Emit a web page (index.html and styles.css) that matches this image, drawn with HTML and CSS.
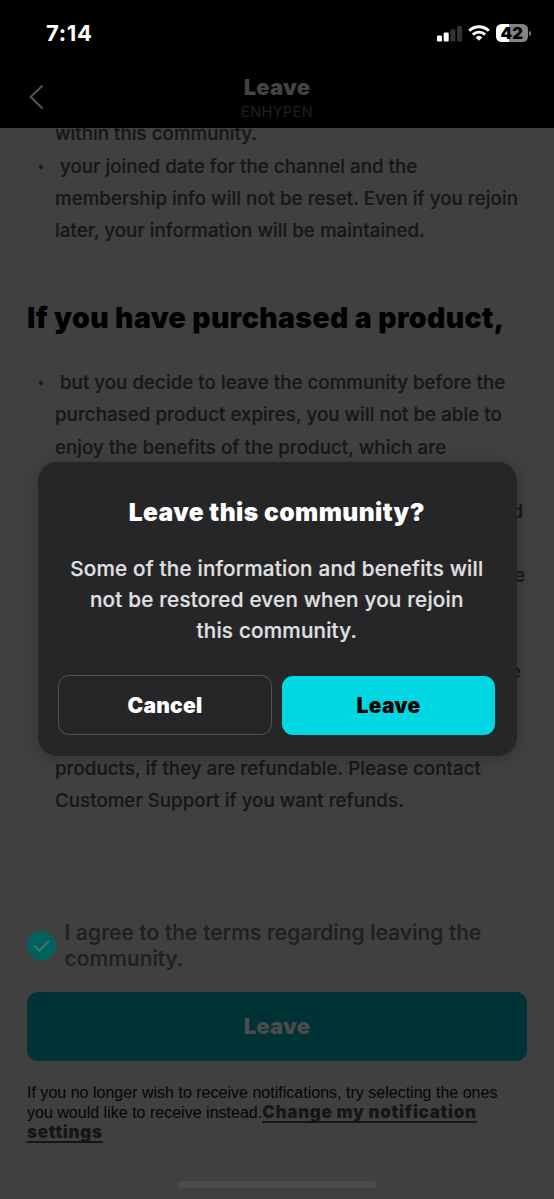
FILE: index.html
```html
<!DOCTYPE html>
<html lang="en">
<head>
<meta charset="utf-8">
<title>Leave</title>
<link rel="stylesheet" href="styles.css">
</head>
<body>
<div class="screen">
  <header class="top">
    <div class="status">
      <span class="time">7:14</span>
      <div class="status-icons">
        <svg class="signal" width="26" height="17" viewBox="0 0 26 17">
          <rect x="0" y="10.5" width="5" height="6" rx="1.2" fill="#fff"/>
          <rect x="6.7" y="7.5" width="5" height="9" rx="1.2" fill="#fff"/>
          <rect x="13.4" y="4.2" width="5" height="12.3" rx="1.2" fill="#333"/>
          <rect x="20.1" y="1" width="5" height="15.5" rx="1.2" fill="#333"/>
        </svg>
        <svg class="wifi" width="22" height="16" viewBox="0 0 22 16">
          <g fill="none" stroke="#fff" stroke-width="2.9">
            <path d="M1.2 5.8a14 14 0 0 1 19.6 0"/>
            <path d="M4.9 9.6a8.8 8.8 0 0 1 12.2 0"/>
          </g>
          <path d="M11 15.8l-3.3-3.4a4.8 4.8 0 0 1 6.6 0z" fill="#fff"/>
        </svg>
        <div class="battery"><span class="level">42</span><span class="cap"></span></div>
      </div>
    </div>
    <div class="nav">
      <svg class="back" width="16" height="26" viewBox="0 0 16 26"><path d="M14.500 1.500 2.700 13l11.800 11.500" fill="none" stroke="#555" stroke-width="2"/></svg>
      <div class="titles">
        <h1 class="title">Leave</h1>
        <p class="subtitle">ENHYPEN</p>
      </div>
    </div>
  </header>

  <main class="content">
    <ul class="list first">
      <li class="item cont">
        <span class="line">within this community.</span>
      </li>
      <li class="item">
        <span class="line ind">your joined date for the channel and the</span>
        <span class="line">membership info will not be reset. Even if you rejoin</span>
        <span class="line">later, your information will be maintained.</span>
      </li>
    </ul>
    <h2 class="heading">If you have purchased a product,</h2>
    <ul class="list second">
      <li class="item">
        <span class="line ind">but you decide to leave the community before the</span>
        <span class="line">purchased product expires, you will not be able to</span>
        <span class="line">enjoy the benefits of the product, which are</span>
        <span class="line"></span>
        <span class="line edge edge-a">d</span>
        <span class="line"></span>
        <span class="line edge edge-b">e</span>
        <span class="line"></span>
        <span class="line"></span>
        <span class="line edge edge-c">e</span>
        <span class="line"></span>
        <span class="line"></span>
        <span class="line">products, if they are refundable. Please contact</span>
        <span class="line">Customer Support if you want refunds.</span>
      </li>
    </ul>
    <div class="agree">
      <svg class="check" width="30" height="30" viewBox="0 0 30 30"><circle cx="14.500" cy="14.700" r="14.500" fill="#006260"/><path d="M7.300 14.700l5 5.200L22 9.900" fill="none" stroke="#4b7471" stroke-width="1.700"/></svg>
      <p class="agree-text">I agree to the terms regarding leaving the<br>community.</p>
    </div>
    <div class="submit">Leave</div>
    <p class="note">If you no longer wish to receive notifications, try selecting the ones<br>you would like to receive instead.<a class="link">Change my notification<br>settings</a></p>
    <div class="home"></div>
  </main>

  <div class="overlay">
    <section class="modal">
      <h2 class="modal-title">Leave this community?</h2>
      <p class="modal-text">Some of the information and benefits will<br>not be restored even when you rejoin<br>this community.</p>
      <div class="actions">
        <div class="btn cancel">Cancel</div>
        <div class="btn confirm">Leave</div>
      </div>
    </section>
  </div>
</div>
</body>
</html>
```
FILE: styles.css
```css
* { box-sizing: border-box; margin: 0; padding: 0; }
body { background: #404040; font-family: Inter, "Liberation Sans", sans-serif; }
.screen { position: relative; width: 554px; height: 1199px; overflow: hidden; background: #404040; display: flex; flex-direction: column; }
.top { height: 128px; background: #000; flex: none; }
.status { height: 66px; padding: 0 23px 0 46px; display: flex; justify-content: space-between; align-items: center; }
.time { color: #fff; font-size: 22px; font-weight: 700; letter-spacing: 0.7px; }
.status-icons { display: flex; align-items: center; }
.wifi { margin-left: 5px; }
.battery { display: flex; align-items: center; margin-left: 6px; }
.level { width: 32.5px; height: 18px; border-radius: 5.5px; background: linear-gradient(90deg, #fff 42%, #848484 42%); color: #000; font-size: 16.5px; line-height: 18.5px; font-weight: 900; text-align: center; }
.cap { width: 2px; height: 5px; margin-left: 1px; border-radius: 0 2px 2px 0; background: #777; }
.nav { height: 62px; padding-left: 28px; display: grid; grid-template-columns: 16px 1fr 44px; }
.back { margin-top: 17.5px; }
.titles { text-align: center; }
.title { margin-top: 8px; font-size: 22px; line-height: 26px; font-weight: 900; color: #434343; letter-spacing: 0.2px; }
.subtitle { margin-top: 4px; font-size: 14.5px; line-height: 16px; color: #202020; letter-spacing: 0.4px; }
.content { flex: 1; overflow: hidden; padding: 0 27px; display: flex; flex-direction: column; }
.list { list-style: none; color: #171717; font-size: 18.7px; font-weight: 500; line-height: 32.13px; letter-spacing: 0.05px; -webkit-text-stroke: 0.2px #171717; }
.first { margin-top: -9.6px; }
.item { position: relative; padding-left: 28px; }
.item::before { content: ""; position: absolute; left: 12px; top: 14px; width: 4px; height: 4px; border-radius: 50%; background: #171717; }
.cont::before { display: none; }
.line { display: block; height: 32.13px; white-space: nowrap; }
.ind { padding-left: 5px; }
.edge { text-align: right; }
.edge-a { margin-right: 4px; }
.edge-b { margin-right: 2px; }
.edge-c { margin-right: 6px; }
.heading { margin-top: 51px; height: 40px; line-height: 40px; font-size: 28.4px; font-weight: 900; color: #000; white-space: nowrap; letter-spacing: 0.4px; }
.second { margin-top: 29.4px; }
.agree { margin-top: 102.5px; display: flex; align-items: center; gap: 7.5px; }
.check { flex: none; }
.agree-text { font-size: 21px; line-height: 26px; font-weight: 500; color: #1f1f1f; white-space: nowrap; letter-spacing: 0.1px; -webkit-text-stroke: 0.2px #1f1f1f; }
.submit { margin-top: 20.7px; height: 69px; flex: none; border-radius: 11px; background: #003236; color: #4b4b4b; font-size: 22px; font-weight: 900; line-height: 69px; text-align: center; letter-spacing: 0.2px; }
.note { margin-top: 22px; height: 60px; font-family: "Liberation Sans", Arial, sans-serif; font-size: 16px; line-height: 20px; color: #050505; white-space: nowrap; letter-spacing: 0.012px; }
.link { font-family: Inter, sans-serif; font-size: 17px; line-height: 18px; font-weight: 900; color: #161616; letter-spacing: 0.68px; text-decoration: underline; text-decoration-thickness: 2px; text-underline-offset: 3px; }
.home { width: 198px; height: 7px; flex: none; margin: 38px auto 0; border-radius: 4px; background: #4b4b4b; }
.overlay { position: absolute; inset: 0; }
.modal { width: 478.5px; height: 294px; margin: 462px 0 0 38px; padding: 34px 21px 20px 20px; border-radius: 19px; background: #262628; box-shadow: 0 2px 16px rgba(0,0,0,.22); text-align: center; }
.modal-title { font-size: 24.6px; line-height: 32px; font-weight: 900; color: #fff; letter-spacing: 0.42px; }
.modal-text { margin-top: 25px; font-size: 20.7px; line-height: 31px; font-weight: 500; color: #e0e0e0; white-space: nowrap; letter-spacing: 0.2px; -webkit-text-stroke: 0.2px #e0e0e0; }
.actions { margin-top: 29px; display: grid; grid-template-columns: 214px 213px; gap: 10px; }
.btn { height: 60px; border-radius: 11px; font-size: 21px; font-weight: 900; line-height: 59.5px; letter-spacing: 0.25px; }
.cancel { border: 1px solid #545456; color: #fff; }
.confirm { height: 59px; margin-top: 0.5px; background: #00d7e2; color: #000; }
```
